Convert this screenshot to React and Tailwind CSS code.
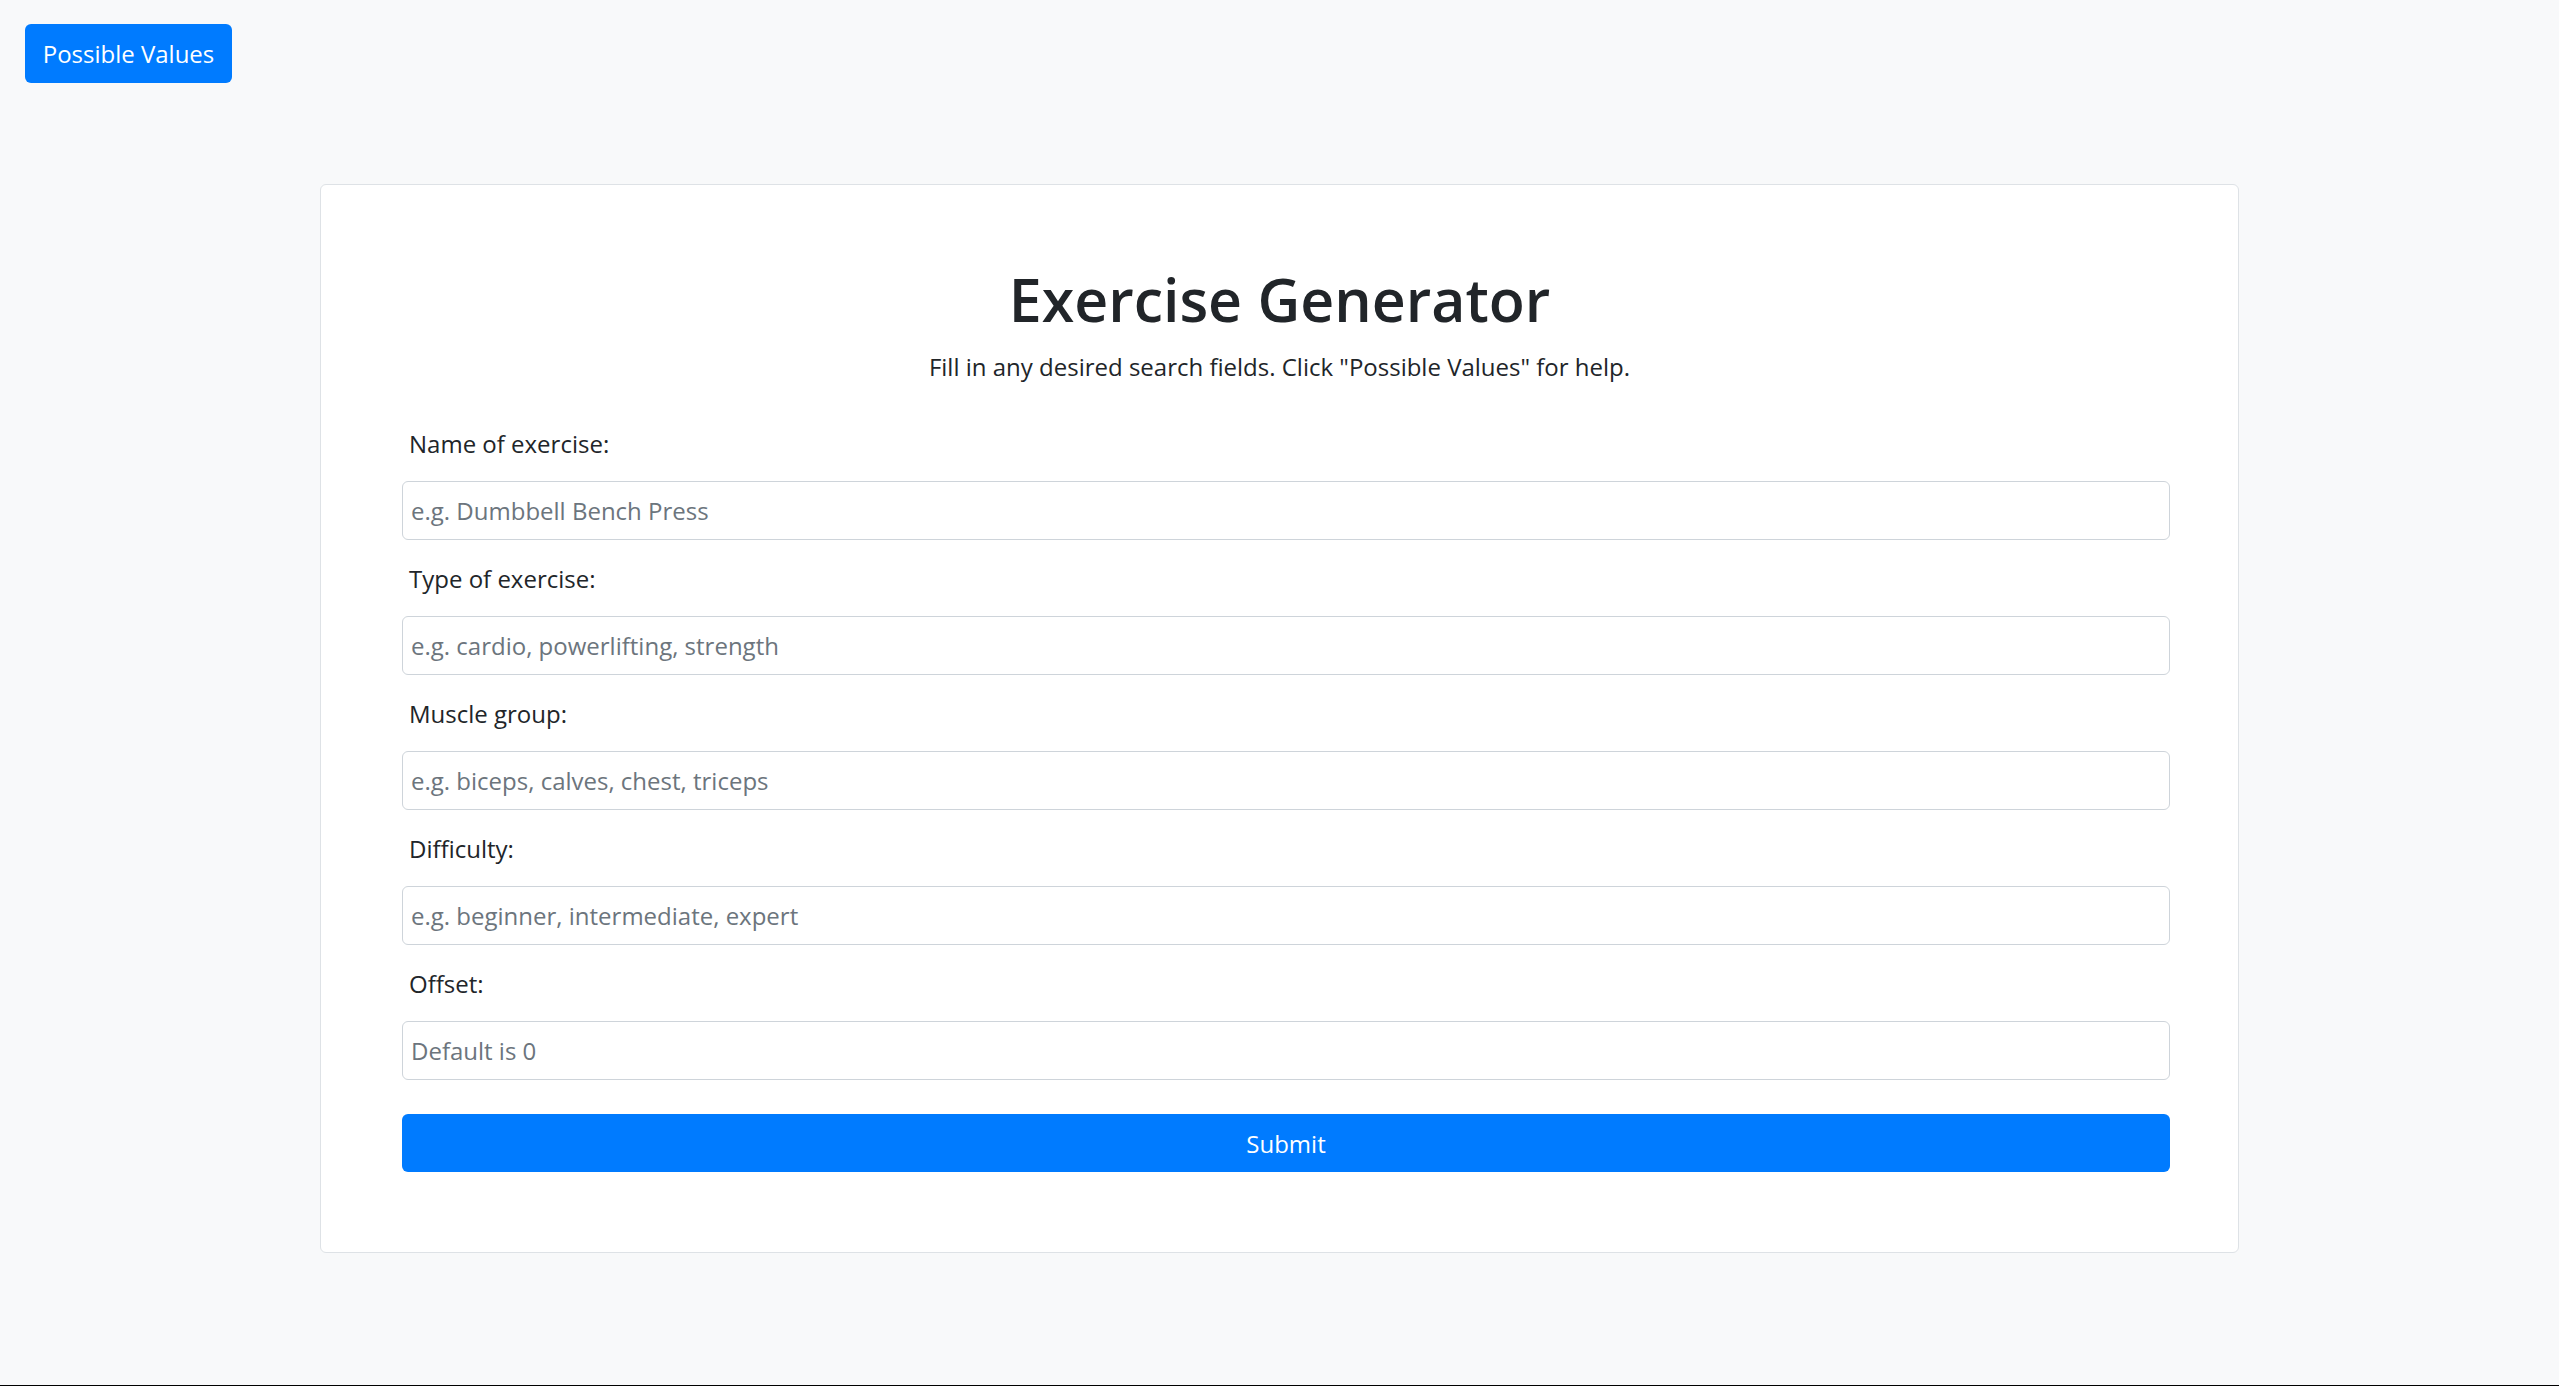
import { useState } from 'react'

const fields = [
  { id: 'name', label: 'Name of exercise:', placeholder: 'e.g. Dumbbell Bench Press' },
  { id: 'type', label: 'Type of exercise:', placeholder: 'e.g. cardio, powerlifting, strength' },
  { id: 'muscle', label: 'Muscle group:', placeholder: 'e.g. biceps, calves, chest, triceps' },
  { id: 'difficulty', label: 'Difficulty:', placeholder: 'e.g. beginner, intermediate, expert' },
  { id: 'offset', label: 'Offset:', placeholder: 'Default is 0' },
]

export default function App() {
  const [values, setValues] = useState({})

  const handleChange = (id, e) => {
    setValues(prev => ({ ...prev, [id]: e.target.value }))
  }

  return (
    <div className="h-[1386px] bg-[#f8f9fa] border-b border-black font-['Open_Sans','Noto_Sans',sans-serif] text-[#212529]">
      <div className="pl-[25px] pt-[24px]">
        <button className="w-[207px] h-[59px] rounded-[6px] bg-[#007bff] text-white text-[24px] leading-[39px]">
          Possible Values
        </button>
      </div>

      <div className="mx-auto mt-[101px] w-[1919px] h-[1069px] bg-white border border-[#dee2e6] rounded-[6px] pt-[76px]">
        <h1 className="text-center text-[59px] leading-[77px] font-semibold">Exercise Generator</h1>
        <p className="mt-[9px] text-center text-[24px] leading-[39px]">
          Fill in any desired search fields. Click "Possible Values" for help.
        </p>

        <form className="mt-[38px] pl-[81px] pr-[68px]" onSubmit={(e) => e.preventDefault()}>
          {fields.map((field, i) => (
            <div key={field.id}>
              <label
                htmlFor={field.id}
                className={`block pl-[7px] text-[24px] leading-[39px] mb-[18px] ${i === 0 ? '' : 'mt-[19px]'}`}
              >
                {field.label}
              </label>
              <input
                id={field.id}
                type="text"
                value={values[field.id] || ''}
                onChange={(e) => handleChange(field.id, e)}
                placeholder={field.placeholder}
                className="block w-full h-[59px] px-[8px] bg-white border border-[#ced4da] rounded-[6px] text-[24px] text-[#495057] placeholder:text-[#6c757d] outline-none"
              />
            </div>
          ))}

          <button
            type="submit"
            className="mt-[34px] block w-full h-[58px] rounded-[6px] bg-[#007bff] text-white text-[24px] leading-[39px]"
          >
            Submit
          </button>
        </form>
      </div>
    </div>
  )
}
